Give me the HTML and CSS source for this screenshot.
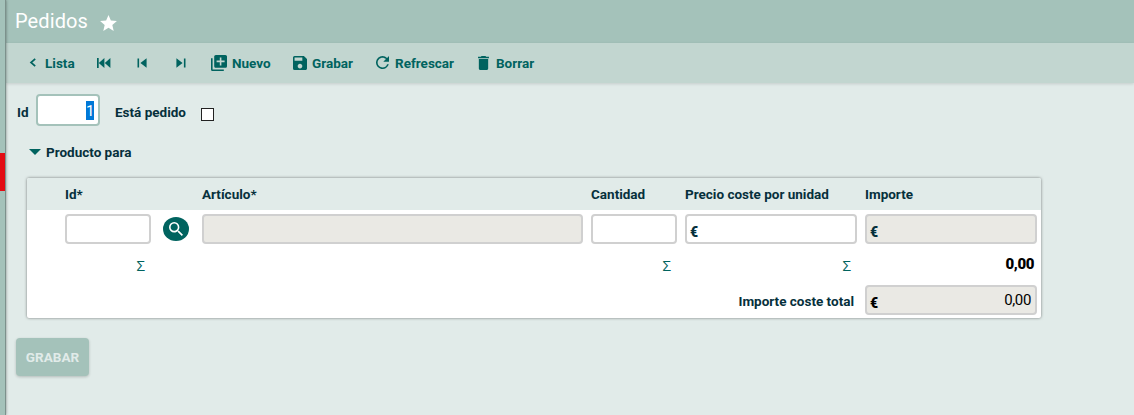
FILE: index.html
```html
<!DOCTYPE html>
<html lang="es">
<head>
<meta charset="utf-8">
<title>Pedidos</title>
<link rel="stylesheet" href="styles.css">
</head>
<body>
<div class="app">
  <aside class="rail"><div class="rail-mark"></div></aside>
  <main class="page">
    <header class="header">
      <h1 class="title">Pedidos</h1>
      <svg class="star" viewBox="2 2 20 19"><path d="M12 17.27L18.18 21l-1.64-7.03L22 9.24l-7.19-.61L12 2 9.19 8.63 2 9.24l5.46 4.73L5.82 21z"/></svg>
    </header>
    <nav class="toolbar">
      <a class="tool tool-list"><svg width="7" height="9" viewBox="0 0 7 9"><path d="M6.2.8 2 4.5l4.2 3.7" fill="none" stroke="currentColor" stroke-width="1.7"/></svg><span>Lista</span></a>
      <a class="tool tool-first"><svg width="14" height="10" viewBox="0 0 14 10"><path d="M0 0h1.7v10H0zM7.4 0v10L1.8 5zM13.4 0v10L7.8 5z"/></svg></a>
      <a class="tool tool-prev"><svg width="10" height="10" viewBox="0 0 10 10"><path d="M.5.5h1.6v9H.5zM9.6.3v9.4L3.4 5z"/></svg></a>
      <a class="tool tool-next"><svg width="10" height="10" viewBox="0 0 10 10"><path d="M7.9.5h1.6v9H7.9zM.4.3v9.4L6.6 5z"/></svg></a>
      <a class="tool tool-new"><svg width="16" height="16" viewBox="2 2 20 20"><path d="M4 6H2v14c0 1.1.9 2 2 2h14v-2H4V6zm16-4H8c-1.1 0-2 .9-2 2v12c0 1.1.9 2 2 2h12c1.1 0 2-.9 2-2V4c0-1.1-.9-2-2-2zm-1 9h-4v4h-2v-4H9V9h4V5h2v4h4v2z"/></svg><span>Nuevo</span></a>
      <a class="tool tool-save"><svg width="14" height="14" viewBox="3 3 18 18"><path d="M17 3H5a2 2 0 0 0-2 2v14a2 2 0 0 0 2 2h14c1.1 0 2-.9 2-2V7l-4-4zm-5 16c-1.66 0-3-1.34-3-3s1.34-3 3-3 3 1.34 3 3-1.34 3-3 3zm3-10H5V5h10v4z"/></svg><span>Grabar</span></a>
      <a class="tool tool-refresh"><svg width="13" height="13" viewBox="4 4 16 16"><path d="M17.65 6.35A7.958 7.958 0 0 0 12 4a8 8 0 1 0 7.73 10h-2.08A5.99 5.99 0 0 1 12 18c-3.31 0-6-2.69-6-6s2.69-6 6-6c1.66 0 3.14.69 4.22 1.78L13 11h7V4l-2.35 2.35z"/></svg><span>Refrescar</span></a>
      <a class="tool tool-delete"><svg width="11" height="14" viewBox="5 3 14 18"><path d="M6 19c0 1.1.9 2 2 2h8c1.1 0 2-.9 2-2V7H6v12zM19 4h-3.5l-1-1h-5l-1 1H5v2h14V4z"/></svg><span>Borrar</span></a>
    </nav>
    <section class="content">
      <div class="fields">
        <span class="label">Id</span>
        <div class="input input-id"><span class="selected">1</span></div>
        <span class="label label-check">Está pedido</span>
        <span class="checkbox"></span>
      </div>
      <h2 class="group"><svg width="12" height="6" viewBox="0 0 12 6"><path d="M0 0h12L6 6z"/></svg><span>Producto para</span></h2>
      <div class="table">
        <div class="row head">
          <span>Id*</span><span></span><span>Artículo*</span><span>Cantidad</span><span>Precio coste por unidad</span><span>Importe</span>
        </div>
        <div class="row entry">
          <div class="input"></div>
          <div class="search"><svg width="14" height="14" viewBox="3 3 17.5 17.5"><path d="M15.5 14h-.79l-.28-.27A6.471 6.471 0 0 0 16 9.5 6.5 6.5 0 1 0 9.5 16c1.61 0 3.09-.59 4.23-1.57l.27.28v.79l5 4.99L20.49 19l-4.99-5zm-6 0C7.01 14 5 11.99 5 9.5S7.01 5 9.5 5 14 7.01 14 9.5 11.99 14 9.5 14z"/></svg></div>
          <div class="input readonly"></div>
          <div class="input"></div>
          <div class="input money"><b>€</b></div>
          <div class="input money readonly"><b>€</b></div>
        </div>
        <div class="row sums">
          <span class="sigma">Σ</span><span></span><span></span><span class="sigma">Σ</span><span class="sigma">Σ</span><strong class="sum">0,00</strong>
        </div>
        <div class="row total">
          <span class="total-label">Importe coste total</span>
          <div class="input money readonly total-input"><b>€</b><span>0,00</span></div>
        </div>
      </div>
      <button class="submit">GRABAR</button>
    </section>
  </main>
</div>
</body>
</html>
```
FILE: styles.css
```css
* { box-sizing: border-box; }
body {
  margin: 0;
  font: 700 13.5px/16px Roboto, sans-serif;
  color: #06303c;
  background: #e1ebe9;
}
svg { display: block; fill: currentColor; flex: none; }
.app { display: flex; height: 415px; overflow: hidden; }
.rail {
  width: 6px;
  padding-top: 153px;
  background: #a4c2ba;
  border-right: 1px solid #7c918c;
  box-shadow: 0 0 3px rgba(0, 0, 0, .45);
  z-index: 1;
}
.rail-mark { height: 38px; background: #e30b13; }
.page { flex: 1; }
.header {
  display: flex;
  height: 43px;
  padding-left: 9px;
  color: #fff;
  background: #a4c2ba;
}
.title { margin: 9px 0 0; width: 85px; font-size: 20px; line-height: 24px; font-weight: 400; letter-spacing: .1px; }
.star { width: 17px; height: 16px; margin-top: 15px; }
.toolbar {
  display: flex;
  align-items: center;
  height: 40px;
  padding-left: 23px;
  color: #00635f;
  background: #c2d6d0;
  box-shadow: 0 1px 3px rgba(0, 0, 0, .13);
}
.tool { display: flex; align-items: center; height: 16px; margin-top: -1px; }
.tool span { letter-spacing: 0; }
.tool-list { width: 68px; gap: 9px; }
.tool-first { width: 40px; }
.tool-prev { width: 39px; }
.tool-next { width: 35px; }
.tool-new { width: 82px; gap: 5px; }
.tool-save { width: 83px; gap: 5px; }
.tool-refresh { width: 102px; gap: 6px; }
.tool-delete { gap: 7px; }
.content { padding: 11px 0 0 10px; }
.fields { display: flex; height: 32px; align-items: center; padding-left: 1px; }
.fields .label { padding-top: 3px; width: 19px; }
.fields .label-check { width: 86px; margin-left: 15px; }
.checkbox { width: 13px; height: 13px; margin-top: 9px; border: 1px solid #222; background: #fff; }
.input {
  height: 30px;
  border: 2px solid #d0d0d0;
  border-radius: 4px;
  background: #fff;
}
.input.readonly { background: #eae9e4; }
.input-id {
  display: flex;
  justify-content: flex-end;
  align-items: center;
  width: 64px;
  height: 32px;
  padding-right: 4px;
  border-color: #a4c2ba;
}
.selected { width: 8px; height: 19px; background: #0078d7; color: #fff; font-size: 15px; line-height: 20px; font-weight: 400; text-align: center; }
.group { display: flex; align-items: center; gap: 5px; height: 16px; margin: 18px 0 0 13px; font-size: 13.5px; line-height: 16px; }
.group svg { color: #00635f; }
.table {
  width: 1014px;
  height: 140px;
  margin: 18px 0 0 11px;
  border-radius: 2px;
  background: #fff;
  box-shadow: 0 0 3px rgba(0, 0, 0, .5);
  overflow: hidden;
}
.row {
  display: grid;
  grid-template-columns: 86px 35px 381px 86px 172px 172px;
  column-gap: 8px;
  padding-left: 38px;
}
.head { height: 32px; padding-top: 8px; background: #e1ebe9; }
.entry { padding-top: 4px; }
.search {
  display: flex;
  align-items: center;
  justify-content: center;
  width: 26px;
  height: 24px;
  margin: 3px 0 0 4px;
  border-radius: 50%;
  background: #00635f;
  color: #fff;
}
.money { display: flex; justify-content: space-between; padding: 8px 4px 0 3px; font-size: 14px; line-height: 16px; }
.money span { margin-top: -3px; font-size: 15px; font-weight: 400; letter-spacing: -.35px; color: #000; }
.sums { height: 41px; padding-top: 12px; }
.sigma { color: #00635f; font: 400 15px/18px "Open Sans", sans-serif; text-align: right; padding-right: 6px; }
.sum { color: #000; font-size: 15px; line-height: 16px; letter-spacing: -.4px; text-align: right; padding-right: 3px; }
.row.total { grid-template-columns: 789px 172px; }
.total-label { text-align: right; padding-top: 8px; }
.total-input { margin-left: 3px; width: 172px; color: #000; }
.submit {
  display: block;
  width: 73px;
  height: 38px;
  margin-top: 20px;
  padding: 0;
  border: 0;
  border-radius: 4px;
  background: #a4c2ba;
  box-shadow: 0 1px 3px rgba(0, 0, 0, .2);
  color: #e1ebe9;
  font: 700 13.5px/16px Roboto, sans-serif;
}
```
